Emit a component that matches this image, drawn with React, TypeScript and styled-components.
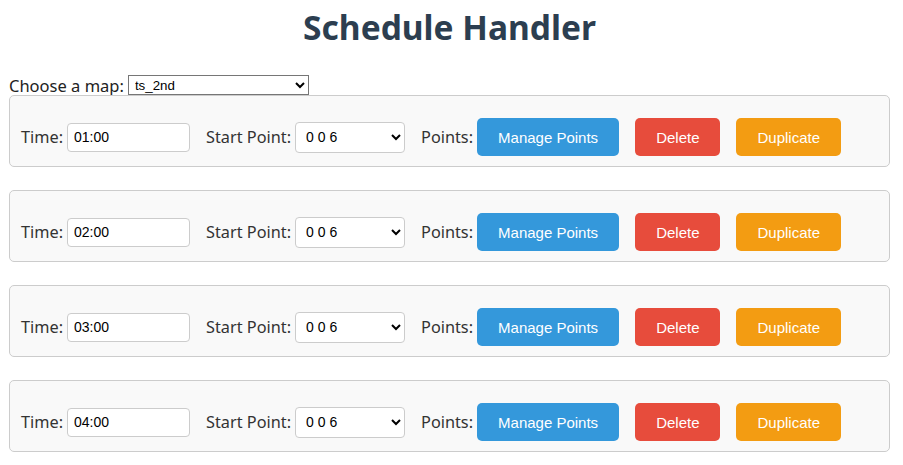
import React, { FC, useState } from "react";
import styled, { createGlobalStyle } from "styled-components";

interface ScheduleItem {
  time: string;
  startPoint: string;
}

const initialSchedules: ScheduleItem[] = [
  { time: "01:00", startPoint: "0 0 6" },
  { time: "02:00", startPoint: "0 0 6" },
  { time: "03:00", startPoint: "0 0 6" },
  { time: "04:00", startPoint: "0 0 6" },
];

const ScheduleRow: FC<{ item: ScheduleItem }> = ({ item }) => {
  return (
    <StyledCard>
      <StyledField>
        <StyledLabel>Time:</StyledLabel>
        <StyledTimeInput defaultValue={item.time} />
      </StyledField>
      <StyledField>
        <StyledLabel>Start Point:</StyledLabel>
        <StyledPointSelect defaultValue={item.startPoint}>
          <option>0 0 6</option>
          <option>1 0 6</option>
        </StyledPointSelect>
      </StyledField>
      <StyledField>
        <StyledLabel>Points:</StyledLabel>
        <StyledButton $color="#3498db">Manage Points</StyledButton>
      </StyledField>
      <StyledButton $color="#e74c3c">Delete</StyledButton>
      <StyledButton $color="#f39c12">Duplicate</StyledButton>
    </StyledCard>
  );
};

const App: FC = () => {
  const [map, setMap] = useState("ts_2nd");

  return (
    <>
      <GlobalStyle />
      <StyledPage>
        <StyledTitle>Schedule Handler</StyledTitle>
        <StyledMapRow>
          <StyledMapLabel>Choose a map:</StyledMapLabel>
          <StyledMapSelect value={map} onChange={(e) => setMap(e.target.value)}>
            <option value="ts_1st">ts_1st</option>
            <option value="ts_2nd">ts_2nd</option>
          </StyledMapSelect>
        </StyledMapRow>
        <StyledList>
          {initialSchedules.map((item, index) => (
            <ScheduleRow key={index} item={item} />
          ))}
        </StyledList>
      </StyledPage>
    </>
  );
};

export default App;

const GlobalStyle = createGlobalStyle`
  body {
    margin: 0;
    background: #fff;
    font-family: "Noto Sans", "Open Sans", sans-serif;
    color: #333;
  }
`;

const StyledPage = styled.div`
  padding: 0 13px 0 9px;
`;

const StyledTitle = styled.h1`
  margin: 0;
  padding-top: 3px;
  height: 58px;
  text-align: center;
  font-size: 33.5px;
  font-weight: bold;
  color: #2c3e50;
  line-height: 48px;
`;

const StyledMapRow = styled.div`
  display: flex;
  align-items: center;
  gap: 4px;
  height: 20px;
  margin-top: 14px;
`;

const StyledMapLabel = styled.label`
  font-size: 16.5px;
  color: #222;
`;

const StyledMapSelect = styled.select`
  width: 181px;
  height: 20px;
  font-family: "Liberation Sans", Arial, sans-serif;
  font-size: 13.33px;
  border: 1px solid #767676;
  border-radius: 0;
  background: #fff;
  color: #000;
  padding: 0 2px;
`;

const StyledList = styled.div`
  display: flex;
  flex-direction: column;
  gap: 23px;
`;

const StyledCard = styled.div`
  display: flex;
  align-items: center;
  gap: 16px;
  height: 72px;
  box-sizing: border-box;
  padding: 22px 11px 10px;
  border: 1px solid #ccc;
  border-radius: 5px;
  background: #f9f9f9;
`;

const StyledField = styled.div`
  display: flex;
  align-items: center;
  gap: 4px;
`;

const StyledLabel = styled.label`
  font-size: 16.3px;
  color: #333;
`;

const StyledTimeInput = styled.input`
  width: 123px;
  height: 29px;
  box-sizing: border-box;
  padding: 0 6px;
  border: 1px solid #ccc;
  border-radius: 4px;
  font-family: "Liberation Sans", Arial, sans-serif;
  font-size: 14px;
  color: #000;
  background: #fff;
`;

const StyledPointSelect = styled.select`
  width: 110px;
  height: 31px;
  box-sizing: border-box;
  padding: 0 6px;
  border: 1px solid #ccc;
  border-radius: 4px;
  font-family: "Liberation Sans", Arial, sans-serif;
  font-size: 14px;
  color: #000;
  background: #fff;
`;

const StyledButton = styled.button<{ $color: string }>`
  height: 38px;
  padding: 0 21px;
  border: none;
  border-radius: 5px;
  background: ${(p) => p.$color};
  color: #fff;
  font-family: "Liberation Sans", Arial, sans-serif;
  font-size: 15px;
  cursor: pointer;
`;
